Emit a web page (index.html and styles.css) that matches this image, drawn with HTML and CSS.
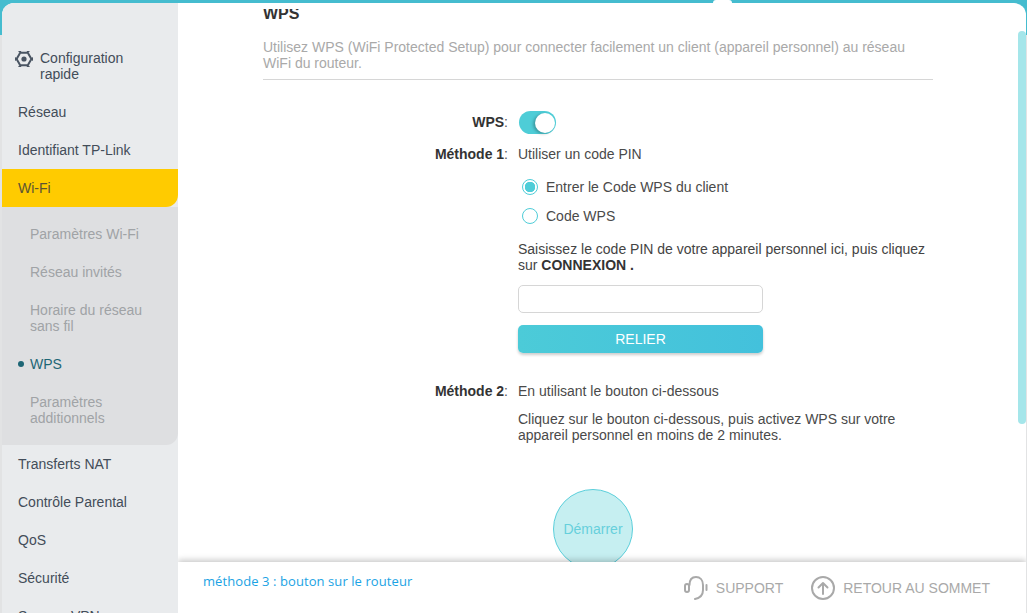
FILE: index.html
```html
<!DOCTYPE html>
<html lang="fr">
<head>
  <meta charset="UTF-8" />
  <title>WPS</title>
  <link rel="stylesheet" href="styles.css">
</head>
<body>
  <div class="frame">
    <div class="notch"></div>
    <div class="card">
      <!-- Menu -->
      <nav class="sidebar">
        <a class="nav-item nav-quick">
          <svg class="quick-icon" width="18" height="18" viewBox="0 0 18 18">
            <path d="M1.6 9 5.2 2.8h7.6L16.4 9l-3.6 6.2H5.2Z" fill="none" stroke="#4a5563" stroke-width="2" stroke-linejoin="round"/>
            <path d="M4 1.6h1.6M12.4 1.6H14M.6 8v2M17.400 8v2M4 16.400h1.600M12.400 16.400H14" stroke="#4a5563" stroke-width="1.400" stroke-linecap="round"/>
            <circle cx="9" cy="9" r="2.600" fill="#4a5563"/>
          </svg>
          <span>Configuration rapide</span>
        </a>
        <a class="nav-item">Réseau</a>
        <a class="nav-item">Identifiant TP-Link</a>
        <a class="nav-item nav-active">Wi-Fi</a>
        <div class="subnav">
          <a class="sub-item">Paramètres Wi-Fi</a>
          <a class="sub-item">Réseau invités</a>
          <a class="sub-item">Horaire du réseau sans fil</a>
          <a class="sub-item sub-active">WPS</a>
          <a class="sub-item">Paramètres additionnels</a>
        </div>
        <a class="nav-item">Transferts NAT</a>
        <a class="nav-item">Contrôle Parental</a>
        <a class="nav-item">QoS</a>
        <a class="nav-item">Sécurité</a>
        <a class="nav-item">Serveur VPN</a>
      </nav>

      <div class="main">
        <div class="scrollbar"></div>
        <div class="content">
          <div class="section">
            <h2 class="title">WPS</h2>
            <p class="desc">Utilisez WPS (WiFi Protected Setup) pour connecter facilement un client (appareil personnel) au réseau WiFi du routeur.</p>

            <div class="row row-toggle">
              <div class="row-label"><b>WPS</b>:</div>
              <div class="toggle"><span class="knob"></span></div>
            </div>

            <div class="row row-method">
              <div class="row-label"><b>Méthode 1</b>:</div>
              <div class="row-value">
                <div>Utiliser un code PIN</div>
                <label class="radio-line"><input type="radio" name="pin" checked>Entrer le Code WPS du client</label>
                <label class="radio-line"><input type="radio" name="pin">Code WPS</label>
                <p class="hint">Saisissez le code PIN de votre appareil personnel ici, puis cliquez sur <b>CONNEXION .</b></p>
                <input class="pin-input" type="text">
                <button class="btn-link">RELIER</button>
              </div>
            </div>

            <div class="row row-method2">
              <div class="row-label"><b>Méthode 2</b>:</div>
              <div class="row-value">
                <div>En utilisant le bouton ci-dessous</div>
                <p class="hint-2">Cliquez sur le bouton ci-dessous, puis activez WPS sur votre appareil personnel en moins de 2 minutes.</p>
                <button class="btn-start">Démarrer</button>
              </div>
            </div>
          </div>
        </div>

        <footer class="footer">
          <div class="note">méthode 3 : bouton sur le routeur</div>
          <div class="footer-links">
            <a class="footer-link">
              <svg width="24" height="24" viewBox="0 0 24 24" fill="none" stroke="#a9a9a9" stroke-width="2" stroke-linecap="round">
                <path d="M5.500 9C5.500 4 8 1 12 1s7 3 7 8v5c0 5-3 8-8 9"/>
                <rect x="1" y="8" width="4" height="8" rx="2"/>
                <path d="M22.500 9v5"/>
              </svg>
              SUPPORT
            </a>
            <a class="footer-link">
              <svg width="24" height="24" viewBox="0 0 24 24" fill="none" stroke="#a9a9a9" stroke-width="2" stroke-linecap="round" stroke-linejoin="round">
                <circle cx="12" cy="12" r="11"/>
                <path d="M12 18V7M7.500 11.500 12 7l4.500 4.500"/>
              </svg>
              RETOUR AU SOMMET
            </a>
          </div>
        </footer>
      </div>
    </div>
  </div>
</body>
</html>
```

FILE: styles.css
```css
html, body {
  margin: 0;
  padding: 0;
  height: 100%;
  overflow: hidden;
  background: #fff;
  font-family: 'Liberation Sans', Arial, sans-serif;
  font-size: 14px;
  line-height: 16px;
  color: #4a4a4a;
}

.frame {
  position: relative;
  width: 1027px;
  height: 100%;
  box-sizing: border-box;
  padding: 3px 1px 0 2px;
  background: linear-gradient(#45bccf 35px, #e2e3e4 35px);
}

.notch {
  position: absolute;
  top: 0;
  left: 713px;
  width: 19px;
  height: 3px;
  background: #fff;
  border-radius: 4px 4px 0 0;
}

.card {
  display: flex;
  height: 100%;
  background: #fff;
  border-radius: 12px 12px 0 0;
  overflow: hidden;
}

/* menu */
.sidebar {
  width: 176px;
  flex-shrink: 0;
  padding-top: 36px;
  background: #e9ebed;
  overflow: hidden;
}

.nav-item {
  display: block;
  padding: 11px 16px;
  color: #434d59;
}

.nav-quick {
  display: flex;
  align-items: flex-start;
  padding-left: 13px;
  padding-right: 30px;
}

.quick-icon {
  flex-shrink: 0;
  margin-right: 7px;
}

.nav-active {
  background: #ffcb00;
  color: #5c5334;
  border-radius: 0 0 12px 0;
}

.subnav {
  padding: 8px 0;
  background: #dedfe1;
  border-radius: 0 0 12px 0;
}

.sub-item {
  display: block;
  position: relative;
  padding: 11px 28px;
  color: #a0a3a6;
}

.sub-active {
  color: #1d6675;
}

.sub-active::before {
  content: "";
  position: absolute;
  left: 16px;
  top: 16px;
  width: 6px;
  height: 6px;
  border-radius: 50%;
  background: #1d6675;
}

/* contenu */
.main {
  position: relative;
  flex: 1;
  display: flex;
  flex-direction: column;
  min-width: 0;
  overflow: hidden;
}

.scrollbar {
  position: absolute;
  top: 28px;
  right: 0;
  width: 8px;
  height: 393px;
  background: #a5e6ea;
  border-radius: 4px;
  z-index: 1;
}

.content {
  flex: 1;
  min-height: 0;
  margin-top: 6px;
  overflow: hidden;
}

.section {
  width: 670px;
  margin-left: 85px;
}

.title {
  margin: 0;
  font-size: 16px;
  line-height: 10px;
  color: #333;
}

.desc {
  margin: 20px 0 0;
  padding-bottom: 8px;
  border-bottom: 1px solid #d6d6d6;
  color: #a9a9a9;
}

.row {
  display: flex;
}

.row-label {
  width: 245px;
  margin-right: 10px;
  flex-shrink: 0;
  text-align: right;
  color: #555;
}

.row-label b {
  color: #333;
}

.row-value {
  width: 415px;
}

.row-toggle {
  align-items: center;
  margin-top: 31px;
}

.row-toggle .row-label {
  padding-bottom: 2px;
}

.toggle {
  display: flex;
  justify-content: flex-end;
  align-items: center;
  width: 37px;
  height: 23px;
  margin-left: 1px;
  padding-right: 1px;
  box-sizing: border-box;
  border-radius: 12px;
  background: #4ecdd7;
}

.knob {
  width: 20px;
  height: 20px;
  border-radius: 50%;
  background: #fff;
  box-shadow: -2px 1px 3px rgba(0, 0, 0, 0.25);
}

.row-method {
  margin-top: 12px;
}

.radio-line {
  display: flex;
  align-items: center;
  margin: 13px 0 0 4px;
  height: 16px;
}

.radio-line:first-of-type {
  margin-top: 17px;
}

.radio-line input {
  appearance: none;
  box-sizing: border-box;
  width: 16px;
  height: 16px;
  margin: 0 8px 0 0;
  border: 1.5px solid #4fcdd8;
  border-radius: 50%;
  background: #fff;
}

.radio-line input:checked {
  background: radial-gradient(circle, #4fcdd8 0 5px, #fff 5.5px);
}

.hint {
  margin: 17px 0 0;
  color: #444;
}

.hint b {
  color: #333;
}

.pin-input {
  display: block;
  box-sizing: border-box;
  width: 245px;
  height: 28px;
  margin-top: 12px;
  border: 1px solid #d6d6d6;
  border-radius: 5px;
  background: #fff;
}

.btn-link {
  display: block;
  width: 245px;
  height: 28px;
  margin-top: 12px;
  border: none;
  border-radius: 5px;
  background: linear-gradient(90deg, #4ccbd8, #43c1dc);
  box-shadow: 0 2px 3px rgba(0, 0, 0, 0.2);
  color: #fff;
  font-family: inherit;
  font-size: 14px;
}

.row-method2 {
  margin-top: 30px;
}

.hint-2 {
  margin: 12px 0 0;
}

.btn-start {
  display: block;
  box-sizing: border-box;
  width: 80px;
  height: 80px;
  margin: 46px 0 0 35px;
  padding: 0;
  border: 1px solid #5bcfdb;
  border-radius: 50%;
  background: #c6eff1;
  color: #66d0dc;
  font-family: inherit;
  font-size: 14px;
}

/* bas de page */
.footer {
  position: relative;
  z-index: 2;
  display: flex;
  justify-content: space-between;
  align-items: center;
  flex-shrink: 0;
  height: 51px;
  padding: 0 36px 0 25px;
  background: #fff;
  box-shadow: 0 -2px 6px rgba(0, 0, 0, 0.22);
}

.note {
  padding-bottom: 13px;
  font-family: 'Open Sans', sans-serif;
  font-size: 13px;
  letter-spacing: 0.08px;
  color: #1ba3e4;
}

.footer-links {
  display: flex;
  gap: 28px;
}

.footer-link {
  display: flex;
  align-items: center;
  gap: 8px;
  color: #a9a9a9;
}
```
